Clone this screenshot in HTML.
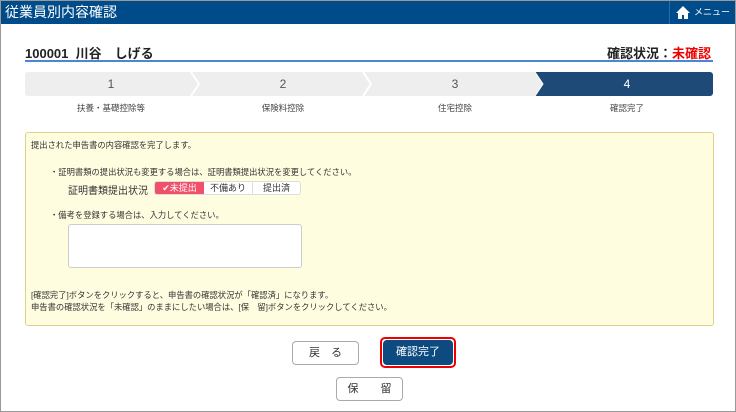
<!DOCTYPE html>
<html><head><meta charset="utf-8"><style>
*{box-sizing:border-box;margin:0;padding:0}
body{width:736px;height:412px;overflow:hidden;background:#fff;font-family:"Liberation Sans","Noto Sans CJK JP",sans-serif;color:#333;position:relative;border:1px solid #999;}
.a{position:absolute}
.hdr{left:0;top:0;width:734px;height:23px;background:#004c8a;color:#fff;font-size:14px;line-height:23px;padding-left:4px}
.menu{right:0;top:0;width:66px;height:23px;border-left:1px solid #2a6aa5;color:#fff;font-size:9px;line-height:23px;padding-left:24px;white-space:nowrap}
.step{top:71px;height:24px;background:#eeeeee;font-size:12px;line-height:24px;text-align:center;color:#555}
.lbl{top:101px;font-size:8.5px;text-align:center;color:#444}
.t{font-size:8.3px;color:#333;white-space:nowrap}
.btn{border:1px solid #aaa;border-radius:4px;background:#fff;font-size:11px;text-align:center;color:#333}
</style></head><body>
<div class="a hdr">従業員別内容確認</div>
<div class="a menu"><svg class="a" style="left:6px;top:5px" width="14" height="13" viewBox="0 0 14 13"><path d="M7 0L0 7h2v6h4V9h2v4h4V7h2z" fill="#fff"/></svg>メニュー</div>
<div class="a" style="left:24px;top:42px;font-size:13px;font-weight:bold;color:#222">100001&nbsp; 川谷　しげる</div>
<div class="a" style="right:24px;top:42px;font-size:13px;font-weight:bold;color:#222">確認状況：<span style="color:#e00">未確認</span></div>
<div class="a" style="left:24px;top:59px;width:688px;height:2px;background:#4a86d4"></div>
<div class="a step" style="left:24px;width:172px;border-radius:3px 0 0 3px">1</div>
<div class="a step" style="left:196px;width:172px">2</div>
<div class="a step" style="left:368px;width:172px">3</div>
<div class="a step" style="left:540px;width:172px;background:#1e4a78;color:#fff;border-radius:0 3px 3px 0">4</div>
<svg class="a" style="left:188px;top:71px" width="370" height="24"><g fill="none" stroke="#fff" stroke-width="2"><path d="M2 0L10 12L2 24"/><path d="M174 0L182 12L174 24"/></g><path d="M346 0L354 12L346 24L360 24L360 0Z" fill="#1e4a78"/><path d="M346 0L354 12L346 24" fill="#eee"/><path d="M346 0L354 12L346 24" fill="none" stroke="#fff" stroke-width="1"/></svg>
<div class="a lbl" style="left:24px;width:172px">扶養・基礎控除等</div>
<div class="a lbl" style="left:196px;width:172px">保険料控除</div>
<div class="a lbl" style="left:368px;width:172px">住宅控除</div>
<div class="a lbl" style="left:540px;width:172px">確認完了</div>
<div class="a" style="left:24px;top:131px;width:689px;height:194px;background:#fffde0;border:1px solid #e3cf8c;border-radius:3px"></div>
<div class="a t" style="left:30px;top:138px">提出された申告書の内容確認を完了します。</div>
<div class="a t" style="left:49px;top:165px">・証明書類の提出状況も変更する場合は、証明書類提出状況を変更してください。</div>
<div class="a t" style="left:67px;top:181px;font-size:10px">証明書類提出状況</div>
<div class="a" style="left:153px;top:180px;width:147px;height:14px;border:1px solid #ddd;border-radius:3px;background:#fff;font-size:9px;line-height:12px">
<span class="a" style="left:0;top:0;width:49px;height:12px;background:#f0506a;color:#fff;text-align:center;border-radius:2px 0 0 2px">✔未提出</span>
<span class="a" style="left:49px;top:0;width:49px;text-align:center;border-right:1px solid #ddd">不備あり</span>
<span class="a" style="left:98px;top:0;width:47px;text-align:center">提出済</span></div>
<div class="a t" style="left:49px;top:208px">・備考を登録する場合は、入力してください。</div>
<div class="a" style="left:67px;top:223px;width:234px;height:44px;background:#fff;border:1px solid #ccc;border-radius:3px"></div>
<div class="a t" style="left:30px;top:288px">[確認完了]ボタンをクリックすると、申告書の確認状況が「確認済」になります。</div>
<div class="a t" style="left:30px;top:300px">申告書の確認状況を「未確認」のままにしたい場合は、[保　留]ボタンをクリックしてください。</div>
<div class="a btn" style="left:291px;top:340px;width:67px;height:24px;line-height:22px">戻　る</div>
<div class="a" style="left:379px;top:336px;width:76px;height:31px;border:2px solid #e00;border-radius:5px"></div>
<div class="a btn" style="left:382px;top:339px;width:70px;height:25px;line-height:23px;background:#0d4a80;color:#fff;border-color:#0d4a80">確認完了</div>
<div class="a btn" style="left:335px;top:376px;width:67px;height:24px;line-height:22px">保　　留</div>
</body></html>
